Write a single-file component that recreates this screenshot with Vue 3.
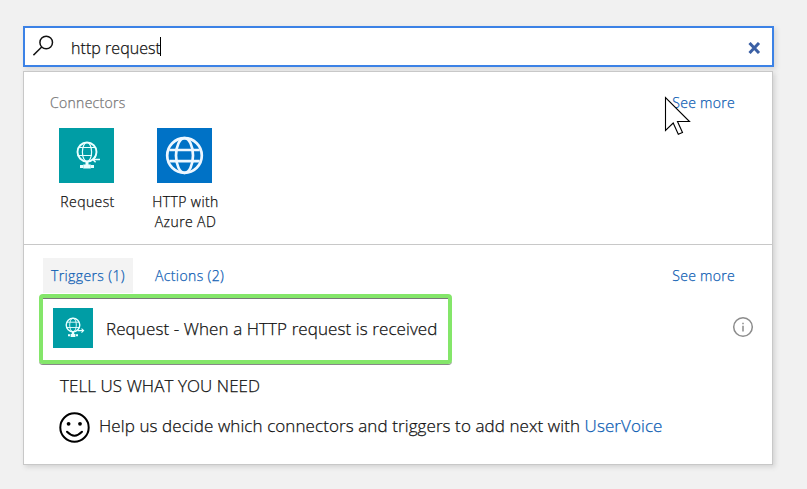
<script setup>
import { ref } from 'vue'

const query = ref('http request')
const connectors = [
  { name: 'Request', kind: 'request' },
  { name: 'HTTP with Azure AD', kind: 'http' },
]
</script>

<template>
  <main class="page">
    <div class="search">
      <svg class="magnifier" width="22" height="22" viewBox="0 0 22 22">
        <circle cx="13.2" cy="7.5" r="6.3" />
        <path d="M8.7 12 0.4 20.2" />
      </svg>
      <span class="query">{{ query }}</span><i class="caret"></i>
      <svg class="clear" width="13" height="12" viewBox="0 0 13 12">
        <path d="M1.5 1 11 11M11 1 1.5 11" />
      </svg>
    </div>

    <div class="panel">
      <section class="connectors">
        <header class="row">
          <span class="label">Connectors</span>
          <a class="more">See more</a>
        </header>
        <div class="tiles">
          <div v-for="c in connectors" :key="c.name" class="tile">
            <div class="tile-icon" :class="c.kind">
              <svg v-if="c.kind === 'request'" width="55" height="55" viewBox="0 0 55 55">
                <g class="line">
                  <circle cx="28" cy="24" r="9.5" stroke-width="1.9" />
                  <ellipse cx="28" cy="24" rx="4.6" ry="9.5" />
                  <path d="M19.8 19.5H36.2M18.5 27.5H33M28 34V37" />
                  <path d="M41 31.5H34M36.6 28.8 33.8 31.5 36.6 34.2" stroke-width="1.5" />
                </g>
                <path class="solid" d="M21 37h3v3H21zM24.2 36.600h7.600v4h-7.600zM32 37h3v3h-3zM26.500 34h3v3h-3z" />
              </svg>
              <svg v-else width="55" height="55" viewBox="0 0 55 55">
                <g class="line globe">
                  <circle cx="27.5" cy="27.5" r="17.3" />
                  <ellipse cx="27.5" cy="27.5" rx="8.5" ry="17.3" />
                  <path d="M12.3 22H42.7M12.3 33.2H42.7" />
                </g>
              </svg>
            </div>
            <span class="tile-name">{{ c.name }}</span>
          </div>
        </div>
      </section>

      <section class="operations">
        <nav class="row tabs">
          <a class="tab active">Triggers (1)</a>
          <a class="tab">Actions (2)</a>
          <a class="more">See more</a>
        </nav>
        <div class="result-row">
          <div class="result">
            <svg class="result-icon" width="40" height="40" viewBox="0 0 40 40">
              <g class="line">
                <circle cx="20" cy="17" r="6.8" stroke-width="1.4" />
                <ellipse cx="20" cy="17" rx="3.3" ry="6.8" stroke-width=".9" />
                <path d="M14 14.2H26M13.5 19.5H26M20 24V27" stroke-width=".9" />
                <path d="M24.5 22.6H30.5M28.5 20.6 30.6 22.6 28.5 24.6" stroke-width="1.1" />
              </g>
              <path class="solid" d="M15 26.3h2v2h-2zM17.6 26h4.800v2.900h-4.800zM23 26.300h2v2h-2zM18.800 24h2.400v2h-2.400z" />
            </svg>
            <span class="result-name">Request - When a HTTP request is received</span>
          </div>
          <svg class="info" width="22" height="22" viewBox="0 0 22 22">
            <circle cx="11" cy="11" r="9.3" />
            <path d="M11 9.8V15.5M11 6.7V8.2" />
          </svg>
        </div>
        <h2 class="need">TELL US WHAT YOU NEED</h2>
        <div class="feedback">
          <svg width="31" height="31" viewBox="0 0 31 31">
            <circle class="face" cx="15.500" cy="15.500" r="14.2" />
            <circle cx="9.600" cy="11.800" r="1.900" />
            <circle cx="21" cy="11.800" r="1.900" />
            <path class="face" d="M8 19.800Q15.500 27.500 23 19.800" />
          </svg>
          <p class="help">Help us decide which connectors and triggers to add next with <a class="voice">UserVoice</a></p>
        </div>
      </section>
    </div>

    <svg class="pointer" width="27" height="40" viewBox="0 0 27 40">
      <path d="M1.500 1.500V34.500L9.200 27 14.300 38.200 18.500 36.500 13.500 25.500H25.500Z" />
    </svg>
  </main>
</template>

<style>
body { background: #f1f1f1; }
</style>

<style scoped>
.page {
  position: relative;
  box-sizing: border-box;
  width: 807px;
  height: 489px;
  padding: 26px 33px 0 23px;
  background: #f1f1f1;
  color: #111;
  font-family: "Open Sans", "Noto Sans", sans-serif;
  font-size: 14px;
  font-weight: 300;
  -webkit-text-stroke: .25px currentColor;
}
a { color: #0f60b4; text-decoration: none; }
.search {
  display: flex;
  align-items: center;
  box-sizing: border-box;
  height: 41px;
  padding: 0 11px 0 8px;
  border: 2px solid #3c82e6;
  background: #fff;
  box-shadow: 2px 2px 5px #d5d5d5;
}
.magnifier { margin-top: -1px; fill: none; stroke: #111; stroke-width: 1.5; }
.query { margin: 2px 0 0 16px; font-size: 16px; letter-spacing: .05px; line-height: 24px; }
.caret { width: 1px; height: 19px; margin-left: -1px; background: #000; }
.clear { margin-left: auto; margin-top: 2px; fill: none; stroke: #3b60a5; stroke-width: 3; }
.panel {
  box-sizing: border-box;
  width: 750px;
  height: 394px;
  margin-top: 4px;
  border: 1px solid #c8c8c8;
  background: #fff;
  box-shadow: 2px 2px 5px #d2d2d2;
}
.connectors { box-sizing: border-box; height: 173px; padding-top: 21px; border-bottom: 1px solid #c8c8c8; }
.row { display: flex; align-items: center; line-height: 20px; padding: 0 37px 0 26px; }
.label { color: #777; letter-spacing: .3px; }
.more { margin-left: auto; letter-spacing: .3px; }
.tiles { display: flex; padding: 15px 0 0 13px; }
.tile { width: 98px; display: flex; flex-direction: column; align-items: center; }
.tile-icon { width: 55px; height: 55px; margin-bottom: 9px; }
.tile-icon svg { display: block; }
.tile-icon.request { background: #009da5; }
.tile-icon.http { background: #0072c6; }
.tile-name { width: 80px; margin-left: 3px; line-height: 20px; text-align: center; letter-spacing: .4px; }
.line { fill: none; stroke: #e9ffff; stroke-width: 1.2; }
.globe { stroke: #eef7ff; stroke-width: 2.7; }
.solid { fill: #e9ffff; }
.tabs { height: 35px; padding: 13px 37px 0 19px; }
.tab { height: 35px; line-height: 35px; padding: 0 8px; margin-right: 14px; letter-spacing: .38px; }
.tab.active { background: #f3f3f3; }
.result-row { display: flex; align-items: center; padding: 1px 18px 0 15px; }
.result {
  display: flex;
  align-items: center;
  box-sizing: border-box;
  width: 413px;
  height: 70px;
  padding-left: 10px;
  border: 4px solid #84e66a;
  border-radius: 4px;
  box-shadow: inset 0 1px #777, 0 1px #888;
}
.result-icon { background: #009da5; margin-top: -2px; }
.result-name { margin: -2px 0 0 13px; font-size: 17px; letter-spacing: .09px; white-space: nowrap; }
.info { margin: -4px 0 0 auto; fill: none; stroke: #8c8c8c; stroke-width: 1.5; }
.need { margin: 10px 0 0 36px; font-size: 17px; font-weight: inherit; letter-spacing: .07px; line-height: 24px; }
.feedback { display: flex; align-items: center; padding: 14px 0 0 35px; }
.feedback .face { fill: none; stroke: #000; stroke-width: 2; stroke-linecap: round; }
.help { margin: -3px 0 0 9px; font-size: 17px; letter-spacing: .09px; line-height: 24px; white-space: nowrap; }
.pointer { position: absolute; left: 664px; top: 96px; fill: #fff; stroke: #000; stroke-width: 1.1; }
</style>
